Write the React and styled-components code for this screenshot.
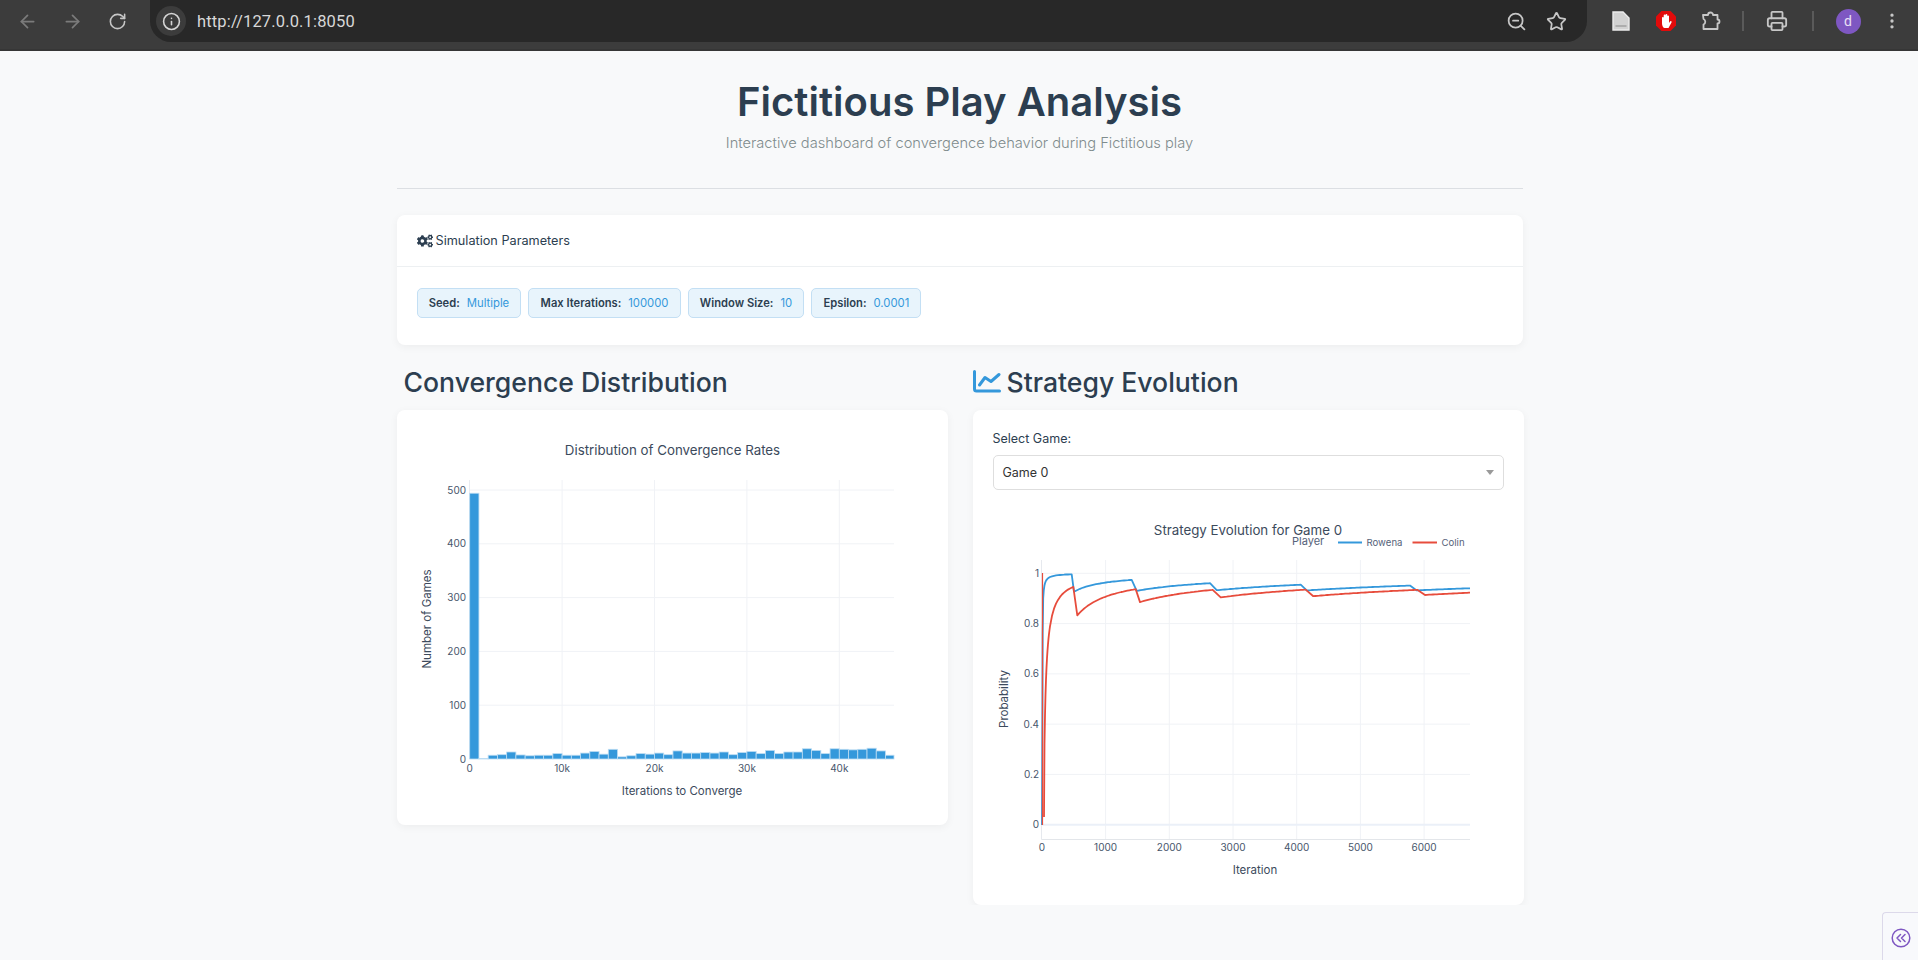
import React from "react";
import styled, { createGlobalStyle } from "styled-components";
import { ArrowLeft, ArrowRight, RotateCw, Info, ZoomOut, Star, Printer, EllipsisVertical } from "lucide-react";
import { FaCogs } from "react-icons/fa";

const Global = createGlobalStyle`
  html, body { margin: 0; padding: 0; background: #f8f9fa; }
  body { font-family: Inter, "Liberation Sans", sans-serif; color: #2c3e50; overflow: hidden; }
`;

const Toolbar = styled.header`
  display: flex; align-items: flex-start; height: 49px; padding: 0 5px;
  background: #3c3c3c; border-bottom: 2px solid #363636; box-sizing: content-box;
`;
const Slot = styled.div`
  width: ${p => p.$w || 45}px; height: 42px; flex: none;
  display: flex; align-items: center; justify-content: center;
  color: ${p => p.$dim ? "#7b7b7b" : "#c7c7c7"};
`;
const Address = styled.div`
  flex: 1; height: 42px; margin: 0 11px 0 10px; padding-left: 6px;
  display: flex; align-items: center; gap: 11px;
  background: #282828; border-radius: 0 0 21px 21px;
`;
const InfoBubble = styled.div`
  width: 30px; height: 30px; border-radius: 50%; background: #3c3c3c; color: #d5d5d5;
  display: flex; align-items: center; justify-content: center; flex: none;
`;
const Url = styled.span`
  font: 400 16.5px Roboto, sans-serif; color: #d8d8d8; flex: 1; letter-spacing: 0.15px;
`;
const AddressIcons = styled.div`
  display: flex; align-items: center; gap: 19px; padding-right: 20px; color: #c7c7c7;
`;
const Separator = styled.div`
  width: 2px; height: 20px; background: #5a5a5a;
`;
const Avatar = styled.div`
  width: 25px; height: 25px; border-radius: 50%; background: #7e57c2; color: #e8e0f5;
  display: flex; align-items: center; justify-content: center; font: 400 14px Roboto, sans-serif;
`;

const Page = styled.main`
  width: 1127px; margin: 0 auto; padding-left: 1px; box-sizing: border-box;
`;
const Hero = styled.section`
  text-align: center; padding: 27px 0 33px; border-bottom: 1px solid #dcdfe3; margin-bottom: 26px;
`;
const Title = styled.h1`
  margin: 0; font-size: 40px; line-height: 48px; font-weight: 600; color: #2c3e50;
`;
const Subtitle = styled.p`
  margin: 5px 0 0; font-size: 14.67px; line-height: 24px; font-weight: 300; color: #7f8c8d;
`;
const Card = styled.section`
  background: #fff; border-radius: 8px; box-shadow: 0 2px 8px rgba(0,0,0,.05);
`;
const CardHead = styled.div`
  height: 51px; padding: 0 20px; display: flex; align-items: center; gap: 3px;
  font-size: 12.7px; border-bottom: 1px solid #edf0f2; color: #2c3e50;
`;
const Pills = styled.div`
  display: flex; gap: 7px; padding: 21px 20px 27px;
`;
const Pill = styled.div`
  height: 30px; padding: 0 11.2px; display: flex; align-items: center; gap: 7px; box-sizing: border-box;
  background: #e8f4fc; border: 1px solid #c3dff4; border-radius: 5px; font-size: 11.3px;
`;
const PillLabel = styled.span`
  font-weight: 600; font-size: 11.2px; color: #2c3e50;
`;
const PillValue = styled.span`
  color: #3498db;
`;
const Columns = styled.div`
  display: grid; grid-template-columns: 551px 551px; column-gap: 25px; align-items: start; margin-top: 18px;
`;
const Heading = styled.h2`
  margin: 0 0 11px; height: 36px; box-sizing: border-box; padding: 1px 0 0 ${p => p.$pad || 0}px;
  display: flex; align-items: center; gap: 6px;
  font-size: 26.6px; line-height: 34px; font-weight: 500; color: #2c3e50;
`;
const ChartSvg = styled.svg`
  display: block;
`;
const Field = styled.div`
  padding: 20px 20px 10px;
`;
const FieldLabel = styled.label`
  display: block; font-size: 12.5px; line-height: 18px; color: #2c3e50; margin-bottom: 7px;
`;
const Select = styled.div`
  height: 35px; box-sizing: border-box; padding: 0 9px; display: flex; align-items: center; justify-content: space-between;
  border: 1px solid #dedede; border-radius: 5px; font-size: 12.5px; color: #333;
`;
const Caret = styled.span`
  width: 0; height: 0; border: 4.5px solid transparent; border-top: 5px solid #999; border-bottom: 0;
`;
const Tab = styled.aside`
  position: fixed; right: 0; bottom: 0; width: 36px; height: 48px; box-sizing: border-box;
  border: 1px solid #dcd9ea; border-right: 0; border-bottom: 0; border-radius: 4px 0 0 0; background: #f8f9fc;
  display: flex; justify-content: center; padding-top: 15px;
`;
const ChartTitle = styled.text`
  font: 400 13.3px Inter, sans-serif; fill: #3c4a5c; text-anchor: middle;
`;
const AxisTitle = styled.text`
  font: 400 11.5px Inter, sans-serif; fill: #3c4a5c; text-anchor: middle;
`;
const Tick = styled.text`
  font: 400 10px Inter, sans-serif; fill: #47566b; text-anchor: ${p => p.$a || "middle"};
`;
const Legend = styled.text`
  font: 400 ${p => p.$s || 9.6}px Inter, sans-serif; fill: #56637a;
`;
const Grid = styled.line`
  stroke: ${p => p.$c || "#f0f2f6"}; stroke-width: ${p => p.$w || 1}px;
`;
const Curve = styled.polyline`
  fill: none; stroke: ${p => p.$c}; stroke-width: ${p => p.$w || 1.8}px; stroke-linejoin: round;
`;

const FileIcon = () => (
  <svg width="18" height="20" viewBox="0 0 18 20">
    <path d="M1 1h10l6 6v12H1z" fill="#d2d2d2" stroke="#ececec" strokeWidth="1.4" />
    <path d="M3.5 15h11" stroke="#999" strokeWidth="1.3" />
  </svg>
);
const AdblockIcon = () => (
  <svg width="22" height="22" viewBox="0 0 22 22">
    <path d="M6.5 1h9L21 6.5v9L15.500 21h-9L1 15.500v-9z" fill="#e20b0b" />
    <path d="M7 11V7.500a.9.9 0 0 1 1.700 0V10V5.500a.9.9 0 0 1 1.800 0V10V5a.9.9 0 0 1 1.800 0v5V6a.9.9 0 0 1 1.700 0v7l1-1.500a.9.9 0 0 1 1.500 1L13.500 18h-4C8 18 7 15 7 13z" fill="#fff" />
  </svg>
);
const PuzzleIcon = () => (
  <svg width="22" height="22" viewBox="0 0 22 22" fill="none" stroke="#c7c7c7" strokeWidth="1.800" strokeLinejoin="round">
    <path d="M3 5h5a2.500 2.500 0 0 1 5 0h4.500v4.500a2 2 0 0 1 0 4V19H3.500v-4.500a3 3 0 0 0 0-5.500z" />
  </svg>
);
const CollapseIcon = () => (
  <svg width="20" height="20" viewBox="0 0 20 20" fill="none" stroke="#7e57c2" strokeWidth="1.500" strokeLinecap="round" strokeLinejoin="round">
    <circle cx="10" cy="10" r="8.800" />
    <path d="M9.500 6.500 6 10l3.500 3.500M14 6.500 10.500 10l3.500 3.500" />
  </svg>
);
const ChartLineIcon = () => (
  <svg width="28" height="23" viewBox="0 0 28 23" fill="none" stroke="#3498db" strokeWidth="3" strokeLinecap="round" strokeLinejoin="round">
    <path d="M1.500 1.500V19a2 2 0 0 0 2 2H26.500" />
    <path d="M6.500 15 12 7.500 18 11.500 26 4.500" />
  </svg>
);

const bars = [494, 1, 7, 8, 13, 7.5, 6, 7, 7, 10, 7, 7, 11, 14, 9, 18, 4, 6, 10, 9, 11, 8, 15, 11, 11, 12, 11, 13, 8, 12, 14, 10, 16, 10, 13, 13, 19, 16, 10, 19, 18, 17, 18, 20, 15, 7];
const hx = v => 469.7 + v * 0.00924;
const hy = v => 759 - v * 0.538;

const Histogram = () => (
  <ChartSvg width="551" height="415" viewBox="397 410 551 415">
    {[100, 200, 300, 400, 500].map(v => <Grid key={v} x1="470" x2="894" y1={hy(v)} y2={hy(v)} />)}
    {[10, 20, 30, 40].map(v => <Grid key={v} x1={hx(v * 1000)} x2={hx(v * 1000)} y1="480" y2="759" />)}
    <Grid x1="469.500" x2="469.500" y1="480" y2="759" $c="#e8ebf0" />
    {bars.map((v, i) => {
      const x = hx(i * 1000);
      const w = Math.min(9.24, 894 - x);
      return <rect key={i} x={x} y={hy(v)} width={w} height={v * 0.538} fill="#3498db" stroke="#bcdcf3" strokeWidth="0.8" />;
    })}
    <ChartTitle x="672.500" y="455">Distribution of Convergence Rates</ChartTitle>
    {[0, 100, 200, 300, 400, 500].map(v => <Tick key={v} $a="end" x="466" y={hy(v) + 3.500}>{v}</Tick>)}
    {[0, 10, 20, 30, 40].map(v => <Tick key={v} x={hx(v * 1000)} y="772">{v ? `${v}k` : "0"}</Tick>)}
    <AxisTitle x="682" y="795">Iterations to Converge</AxisTitle>
    <AxisTitle x="431" y="619" transform="rotate(-90 431 619)">Number of Games</AxisTitle>
  </ChartSvg>
);

const sx = v => 1041.900 + v * 0.0637;
const sy = v => 824.700 - v * 251.400;
const TOP = 573.3;
const hyp = (c, from, to, step = 2) => {
  const out = [];
  for (let x = from; x < to; x += step) out.push(`${x},${(TOP + c / (x - 1042)).toFixed(1)}`);
  out.push(`${to},${(TOP + c / (to - 1042)).toFixed(1)}`);
  return out.join(" ");
};
const blue = [
  "1042,825 1042.500,700 1042.700,633",
  hyp(30, 1043.2, 1048, 0.6),
  hyp(30, 1048, 1071.7),
  hyp(590, 1074, 1131.7),
  hyp(1660, 1136.7, 1210),
  hyp(2960, 1216.7, 1300.7),
  hyp(4530, 1306.7, 1410),
  hyp(6400, 1416.7, 1470),
].join(" ");
const red = [
  "1044,817",
  hyp(425, 1044.5, 1050, 0.5),
  hyp(425, 1050, 1073.3),
  hyp(1485, 1077.3, 1135.7),
  hyp(2820, 1140, 1212.7),
  hyp(4300, 1220.7, 1305.7),
  hyp(6200, 1313.3, 1417.3),
  hyp(8300, 1425, 1470),
].join(" ");

const Evolution = () => (
  <ChartSvg width="551" height="405" viewBox="973 500 551 405">
    {[0.2, 0.4, 0.6, 0.8, 1].map(v => <Grid key={v} x1="1042" x2="1470" y1={sy(v)} y2={sy(v)} />)}
    {[1, 2, 3, 4, 5, 6].map(v => <Grid key={v} x1={sx(v * 1000)} x2={sx(v * 1000)} y1="560" y2="839" />)}
    <Grid x1="1042" x2="1470" y1={sy(0)} y2={sy(0)} $c="#ebf0f8" $w={2} />
    <Grid x1="1041.500" x2="1041.500" y1="560" y2="839.500" $c="#e6e9ee" />
    <Grid x1="1041.500" x2="1470" y1="839.500" y2="839.500" $c="#e3e6ea" />
    <Curve points={blue} $c="#3498db" />
    <Grid x1="1042.500" x2="1042.500" y1="573" y2="825" $c="#e74c3c" $w={1.2} />
    <Curve points={red} $c="#e74c3c" />
    <ChartTitle x="1248" y="535">Strategy Evolution for Game 0</ChartTitle>
    <Legend $s={11} x="1292" y="545">Player</Legend>
    <Grid x1="1338" x2="1362" y1="542.500" y2="542.500" $c="#3498db" $w={2} />
    <Legend x="1366.500" y="546">Rowena</Legend>
    <Grid x1="1412.500" x2="1437" y1="542.500" y2="542.500" $c="#e74c3c" $w={2} />
    <Legend x="1441.500" y="546">Colin</Legend>
    {[0, 0.2, 0.4, 0.6, 0.8, 1].map(v => <Tick key={v} $a="end" x="1039" y={sy(v) + 3.500}>{v}</Tick>)}
    {[0, 1000, 2000, 3000, 4000, 5000, 6000].map(v => <Tick key={v} x={sx(v)} y="851">{v}</Tick>)}
    <AxisTitle x="1255" y="874">Iteration</AxisTitle>
    <AxisTitle x="1008" y="699" transform="rotate(-90 1008 699)">Probability</AxisTitle>
  </ChartSvg>
);

const params = [
  ["Seed:", "Multiple"],
  ["Max Iterations:", "100000"],
  ["Window Size:", "10"],
  ["Epsilon:", "0.0001"],
];

export default function App() {
  return (
    <>
      <Global />
      <Toolbar>
        <Slot $dim><ArrowLeft size={21} /></Slot>
        <Slot $dim><ArrowRight size={21} /></Slot>
        <Slot><RotateCw size={19} /></Slot>
        <Address>
          <InfoBubble><Info size={19} /></InfoBubble>
          <Url>http://127.0.0.1:8050</Url>
          <AddressIcons>
            <ZoomOut size={21} />
            <Star size={21} />
          </AddressIcons>
        </Address>
        <Slot><FileIcon /></Slot>
        <Slot><AdblockIcon /></Slot>
        <Slot><PuzzleIcon /></Slot>
        <Slot $w={20}><Separator /></Slot>
        <Slot $w={48}><Printer size={22} /></Slot>
        <Slot $w={24}><Separator /></Slot>
        <Slot $w={46}><Avatar>d</Avatar></Slot>
        <Slot $w={42}><EllipsisVertical size={20} /></Slot>
      </Toolbar>
      <Page>
        <Hero>
          <Title>Fictitious Play Analysis</Title>
          <Subtitle>Interactive dashboard of convergence behavior during Fictitious play</Subtitle>
        </Hero>
        <Card>
          <CardHead><FaCogs size={16} />Simulation Parameters</CardHead>
          <Pills>
            {params.map(([k, v]) => (
              <Pill key={k}><PillLabel>{k}</PillLabel><PillValue>{v}</PillValue></Pill>
            ))}
          </Pills>
        </Card>
        <Columns>
          <div>
            <Heading $pad={7}>Convergence Distribution</Heading>
            <Card><Histogram /></Card>
          </div>
          <div>
            <Heading>
              <ChartLineIcon />
              Strategy Evolution
            </Heading>
            <Card>
              <Field>
                <FieldLabel>Select Game:</FieldLabel>
                <Select>Game 0<Caret /></Select>
              </Field>
              <Evolution />
            </Card>
          </div>
        </Columns>
      </Page>
      <Tab><CollapseIcon /></Tab>
    </>
  );
}
